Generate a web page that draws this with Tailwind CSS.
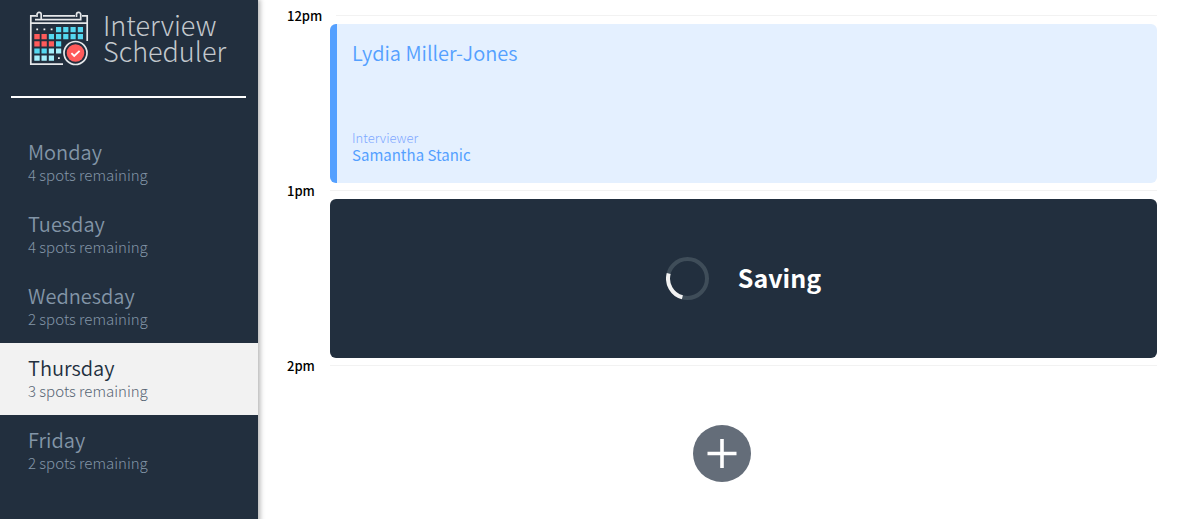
<!DOCTYPE html>
<html lang="en">
<head>
<meta charset="utf-8">
<meta name="viewport" content="width=device-width, initial-scale=1">
<title>Interview Scheduler</title>
<script src="https://cdn.jsdelivr.net/npm/@tailwindcss/browser@4"></script>
</head>
<body class="flex min-h-screen overflow-x-hidden bg-white font-['Noto_Sans_CJK_SC','Open_Sans',sans-serif] text-black">
<aside class="relative z-10 w-[258px] shrink-0 bg-[#222f3e] shadow-[1px_0_5px_1px_rgba(0,0,0,0.3)]">
  <a href="#" class="flex h-24 items-start gap-[14px] pt-[11px] pl-[29px]" aria-label="Interview Scheduler">
    <svg class="h-[56px] w-[60px] shrink-0" viewBox="0 0 60 56" fill="none" aria-hidden="true">
      <g stroke="#e6e8ea" stroke-width="1.7">
        <path d="M34 53.2H1.8V4.8H7M14 4.8H46M53 4.8H58.2V30"/>
        <path d="M1.8 12.2H58.2"/>
        <path d="M6 8.6H12.2V3.5a2.1 2.1 0 0 0-4.2 0V6M12.2 8.6H51.7V3.5a2.1 2.1 0 0 0-4.2 0V6"/>
      </g>
      <path fill="#54d8f0" d="M27 16h5.2v5.2H27zM34.2 16h5.2v5.2h-5.2zM41.5 16h5.2v5.2h-5.2zM48.8 16h5.2v5.2h-5.2zM19.8 23H25v5.2h-5.2zM27 23h5.2v5.2H27zM34.2 23h5.2v5.2h-5.2zM41.5 23h5.2v5.2h-5.2zM48.8 23h5.2v5.2h-5.2zM27 30.2h5.2v5.2H27zM5.3 37.4h5.4v5.2H5.3zM12.5 37.4h5.3v5.2h-5.3z"/>
      <path fill="#ff5b5b" d="M5.3 23h5.4v5.2H5.3zM12.5 23h5.3v5.2h-5.3zM5.3 30.2h5.4v5.2H5.3zM12.5 30.2h5.3v5.2h-5.3zM19.8 30.2H25v5.2h-5.2z"/>
      <path fill="#a5effb" d="M19.8 37.4H25v5.2h-5.2zM27 37.4h5.2v5.2H27zM5.3 44.6h5.4v5.2H5.3zM12.5 44.6h5.3v5.2h-5.3zM19.8 44.6H25v5.2h-5.2z"/>
      <path fill="#f2f2f2" d="M7.3 17.5h1.8v1.8H7.3zM14.5 17.5h1.8v1.8h-1.8zM21.7 17.5h1.8v1.8h-1.8zM29 46.2h1.8V48H29z"/>
      <circle cx="46.5" cy="42" r="13" fill="#222f3e"/>
      <circle cx="46.5" cy="42" r="11.5" stroke="#e6e8ea" stroke-width="1.7"/>
      <circle cx="46.5" cy="42" r="8.8" fill="#ff5b5b"/>
      <path stroke="#fff" stroke-width="1.8" d="m42.4 42.2 2.8 2.8 5.4-5.2"/>
    </svg>
    <span class="pt-px text-[27px] leading-[26px] font-light text-[#c3c8cd]">Interview<br>Scheduler</span>
  </a>
  <hr class="mr-3 ml-[11px] border-0 border-t-2 border-white">
  <nav class="pt-[29px]" aria-label="Days">
    <ul class="text-[#8395a7]">
      <li><button type="button" class="block h-[72px] w-full px-7 pb-0.5 text-left"><span class="block text-[20px] leading-6 font-[350]">Monday</span><span class="block pt-px text-[15px] leading-5 font-light">4 spots remaining</span></button></li>
      <li><button type="button" class="block h-[72px] w-full px-7 pb-0.5 text-left"><span class="block text-[20px] leading-6 font-[350]">Tuesday</span><span class="block pt-px text-[15px] leading-5 font-light">4 spots remaining</span></button></li>
      <li><button type="button" class="block h-[72px] w-full px-7 pb-0.5 text-left"><span class="block text-[20px] leading-6 font-[350]">Wednesday</span><span class="block pt-px text-[15px] leading-5 font-light">2 spots remaining</span></button></li>
      <li class="bg-[#f2f2f2]"><button type="button" aria-current="date" class="block h-[72px] w-full px-7 pb-0.5 text-left"><span class="block text-[20px] leading-6 font-[350] text-[#222f3e]">Thursday</span><span class="block pt-px text-[15px] leading-5 font-light text-[#576574]">3 spots remaining</span></button></li>
      <li><button type="button" class="block h-[72px] w-full px-7 pb-0.5 text-left"><span class="block text-[20px] leading-6 font-[350]">Friday</span><span class="block pt-px text-[15px] leading-5 font-light">2 spots remaining</span></button></li>
    </ul>
  </nav>
</aside>
<main class="min-w-0 flex-1 pt-[7px] pr-[23px] pl-[29px]">
  <article class="h-[175px]">
    <header class="flex h-[17px] items-center"><h2 class="min-w-[43px] pr-[14px] text-[13px] leading-4 font-medium">12pm</h2><hr class="flex-1 border-0 border-t border-[#f2f2f2]"></header>
    <section class="ml-[43px] flex h-[159px] flex-col justify-between rounded-md border-l-[7px] border-[#54a0ff] bg-[#e4f0ff] pt-[15px] pb-[19px] pl-[15px] text-[#54a0ff]">
      <h3 class="text-[20px] leading-7 font-[350]">Lydia Miller-Jones</h3>
      <div><h4 class="text-[13px] leading-4 font-light text-[#7fa8ff]">Interviewer</h4><p class="text-[15px] leading-[18px]">Samantha Stanic</p></div>
    </section>
  </article>
  <article class="h-[175px]">
    <header class="flex h-[17px] items-center"><h2 class="min-w-[43px] pr-[14px] text-[13px] leading-4 font-medium">1pm</h2><hr class="flex-1 border-0 border-t border-[#f2f2f2]"></header>
    <section class="ml-[43px] flex h-[159px] items-center justify-center gap-[29px] rounded-md bg-[#222f3e] text-white" role="status">
      <svg class="size-[43px]" viewBox="0 0 43 43" fill="none" aria-hidden="true"><circle cx="21.5" cy="21.5" r="19.5" stroke="#3f4d59" stroke-width="4"/><path d="M2.7 16.4A19.5 19.5 0 0 0 16.4 40.3" stroke="#f2f2f2" stroke-width="4"/></svg>
      <p class="pb-1 text-[25px] leading-8 font-bold">Saving</p>
    </section>
  </article>
  <article>
    <header class="flex h-[17px] items-center"><h2 class="min-w-[43px] pr-[14px] text-[13px] leading-4 font-medium">2pm</h2><hr class="flex-1 border-0 border-t border-[#f2f2f2]"></header>
    <div class="flex h-[152px] items-center justify-center pt-[7px]">
      <button type="button" aria-label="Add appointment"><svg class="h-[57px] w-[58px]" viewBox="0 0 58 57" aria-hidden="true"><ellipse cx="29" cy="28.5" rx="29" ry="28.5" fill="#646d79"/><path d="M14.5 28.5H43.5M29 14V43" stroke="#fff" stroke-width="3.6" fill="none"/></svg></button>
    </div>
  </article>
</main>
</body>
</html>
